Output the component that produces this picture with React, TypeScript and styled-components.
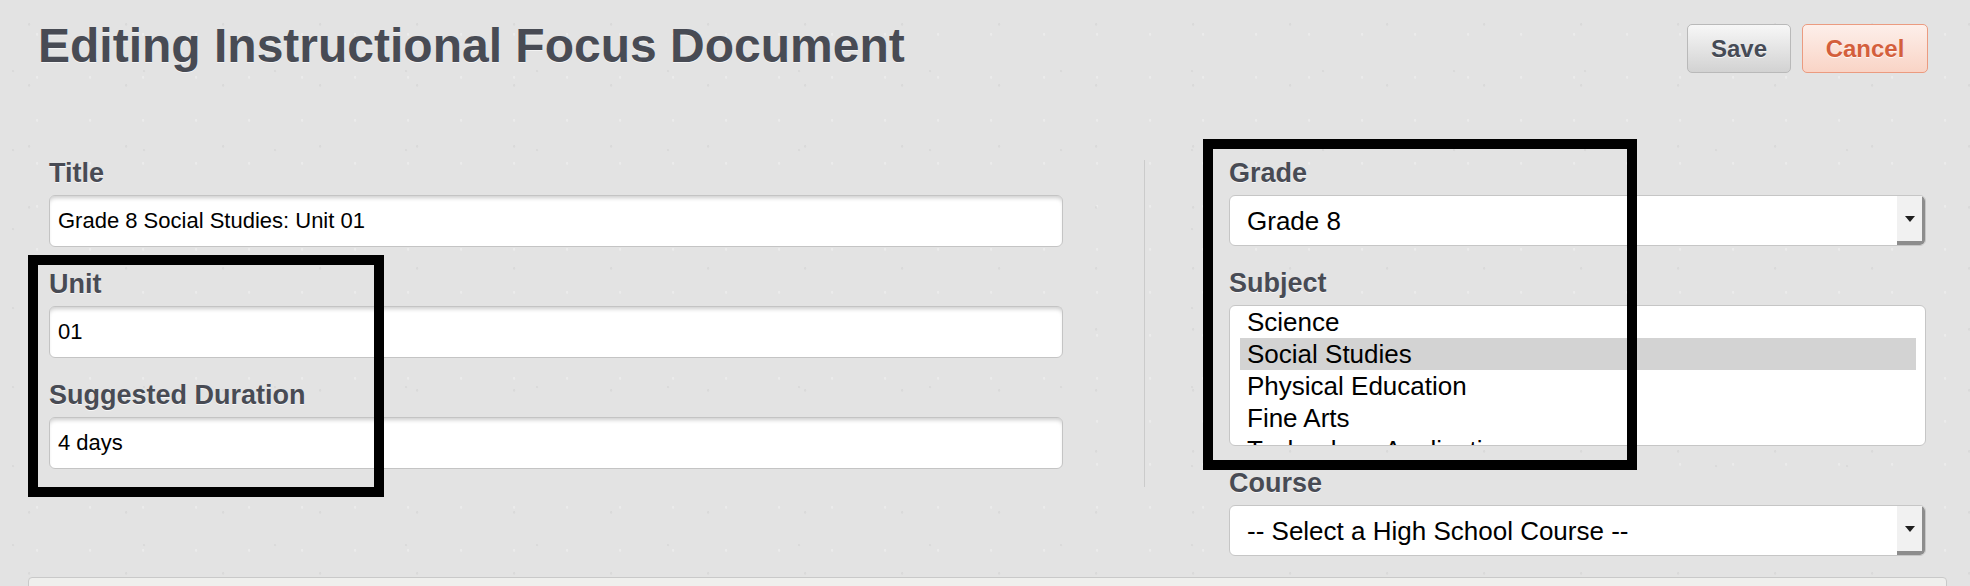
import React from "react";
import styled, { createGlobalStyle } from "styled-components";

const GlobalStyle = createGlobalStyle`
  html, body {
    margin: 0;
    padding: 0;
    background-color: #e3e3e3;
  }
  body {
    font-family: "Liberation Sans", Arial, Helvetica, sans-serif;
    background-image:
      radial-gradient(circle at 30% 40%, rgba(175, 175, 175, 0.18) 0 1px, transparent 1.5px),
      radial-gradient(circle at 70% 80%, rgba(255, 255, 255, 0.3) 0 1px, transparent 1.5px),
      radial-gradient(circle at 10% 90%, rgba(165, 165, 165, 0.14) 0 1px, transparent 1.5px);
    background-size: 97px 61px, 53px 43px, 131px 79px;
  }
`;

const TEXT_DARK = "#484b54";

const Page = styled.div`
  position: relative;
  width: 1970px;
  height: 586px;
  overflow: hidden;
  padding: 0 23px 0 28px;
  box-sizing: border-box;
`;

const Header = styled.div`
  display: flex;
  justify-content: space-between;
  align-items: flex-start;
  padding: 18px 19px 0 10px;
`;

const Heading = styled.h1`
  margin: 0;
  font-size: 48px;
  line-height: 56px;
  font-weight: 700;
  color: ${TEXT_DARK};
  text-shadow: 0 1px 0 rgba(255, 255, 255, 0.6);
`;

const Actions = styled.div`
  display: flex;
  gap: 11px;
  margin-top: 6px;
`;

const Button = styled.button<{ $variant?: "cancel" }>`
  height: 49px;
  padding: 0;
  width: ${({ $variant }) => ($variant === "cancel" ? "126px" : "104px")};
  border-radius: 5px;
  font-family: "Liberation Sans", Arial, sans-serif;
  font-size: 24px;
  font-weight: 700;
  cursor: pointer;
  text-shadow: 0 1px 0 rgba(255, 255, 255, 0.8);
  border: 1.5px solid ${({ $variant }) => ($variant === "cancel" ? "#eb9b80" : "#b9b9b9")};
  color: ${({ $variant }) => ($variant === "cancel" ? "#d45f3c" : "#464b56")};
  background: ${({ $variant }) =>
    $variant === "cancel"
      ? "linear-gradient(#fdefea, #f9d4c6)"
      : "linear-gradient(#f7f7f7, #d2d2d2)"};
`;

const FormRow = styled.div`
  display: flex;
  align-items: flex-start;
  margin-top: 83px;
  padding: 0 21px;
`;

const LeftColumn = styled.div`
  width: 1014px;
  display: flex;
  flex-direction: column;
`;

const Divider = styled.div`
  width: 1px;
  height: 327px;
  margin: 3px 84px 0 81px;
  background: #cbcbcb;
`;

const RightColumn = styled.div`
  flex: 1;
  display: flex;
  flex-direction: column;
`;

const Field = styled.div`
  display: flex;
  flex-direction: column;
  margin-bottom: 21px;
`;

const Label = styled.label`
  font-size: 27px;
  line-height: 32px;
  font-weight: 700;
  color: ${TEXT_DARK};
  text-shadow: 0 1px 0 rgba(255, 255, 255, 0.7);
  margin-bottom: 6px;
`;

const TextInput = styled.input`
  height: 52px;
  box-sizing: border-box;
  padding: 0 8px;
  border: 1px solid #c4c4c4;
  border-radius: 6px;
  background: #fff;
  box-shadow: inset 0 4px 4px -2px rgba(0, 0, 0, 0.2);
  font-family: "Liberation Sans", Arial, sans-serif;
  font-size: 22px;
  color: #000;
  outline: none;
`;

const SelectBox = styled.div`
  display: flex;
  height: 51px;
  box-sizing: border-box;
  border: 1px solid #c6c6c6;
  border-radius: 6px;
  background: #fff;
  overflow: hidden;
`;

const NativeSelect = styled.select`
  flex: 1;
  appearance: none;
  border: none;
  background: transparent;
  padding: 0 0 0 17px;
  font-family: "Liberation Sans", Arial, sans-serif;
  font-size: 26px;
  color: #000;
  outline: none;
`;

const ArrowTab = styled.div`
  width: 28px;
  display: flex;
  align-items: center;
  justify-content: center;
  background: #f1f1f1;
  box-shadow: inset -3px -4px 0 #8d8d8d;
  padding: 0 3px 4px 0;
  box-sizing: border-box;
`;

const ListBox = styled.div`
  height: 141px;
  box-sizing: border-box;
  border: 1px solid #c6c6c6;
  border-radius: 6px;
  background: #fff;
  padding: 0 9px 0 10px;
  overflow: hidden;
`;

const ListOption = styled.div<{ $selected?: boolean }>`
  height: 32px;
  line-height: 32px;
  padding-left: 7px;
  font-size: 26px;
  color: #000;
  white-space: nowrap;
  background: ${({ $selected }) => ($selected ? "#d3d3d3" : "transparent")};
`;

const BottomPanel = styled.div`
  height: 60px;
  border: 1px solid #c9c9c9;
  border-radius: 4px;
  background: #efefed;
`;

const Annotation = styled.div<{ $x: number; $y: number; $w: number; $h: number }>`
  position: absolute;
  left: ${({ $x }) => $x}px;
  top: ${({ $y }) => $y}px;
  width: ${({ $w }) => $w}px;
  height: ${({ $h }) => $h}px;
  box-sizing: border-box;
  border: 10px solid #000;
  pointer-events: none;
`;

const DownArrow = () => (
  <svg width="10" height="6" viewBox="0 0 10 6">
    <path d="M0 0 H10 L5 6 Z" fill="#1e1e1e" />
  </svg>
);

const Select = ({ value }: { value: string }) => (
  <SelectBox>
    <NativeSelect defaultValue={value}>
      <option>{value}</option>
    </NativeSelect>
    <ArrowTab>
      <DownArrow />
    </ArrowTab>
  </SelectBox>
);

const subjects = [
  "Science",
  "Social Studies",
  "Physical Education",
  "Fine Arts",
  "Technology Applications",
];

export default function App() {
  return (
    <>
      <GlobalStyle />
      <Page>
        <Header>
          <Heading>Editing Instructional Focus Document</Heading>
          <Actions>
            <Button>Save</Button>
            <Button $variant="cancel">Cancel</Button>
          </Actions>
        </Header>

        <FormRow>
          <LeftColumn>
            <Field>
              <Label>Title</Label>
              <TextInput defaultValue="Grade 8 Social Studies: Unit 01" />
            </Field>
            <Field>
              <Label>Unit</Label>
              <TextInput defaultValue="01" />
            </Field>
            <Field>
              <Label>Suggested Duration</Label>
              <TextInput defaultValue="4 days" />
            </Field>
          </LeftColumn>

          <Divider />

          <RightColumn>
            <Field>
              <Label>Grade</Label>
              <Select value="Grade 8" />
            </Field>
            <Field>
              <Label>Subject</Label>
              <ListBox role="listbox">
                {subjects.map((s) => (
                  <ListOption key={s} $selected={s === "Social Studies"}>
                    {s}
                  </ListOption>
                ))}
              </ListBox>
            </Field>
            <Field>
              <Label>Course</Label>
              <Select value="-- Select a High School Course --" />
            </Field>
          </RightColumn>
        </FormRow>

        <BottomPanel />

        <Annotation $x={28} $y={255} $w={356} $h={242} />
        <Annotation $x={1203} $y={139} $w={434} $h={331} />
      </Page>
    </>
  );
}
